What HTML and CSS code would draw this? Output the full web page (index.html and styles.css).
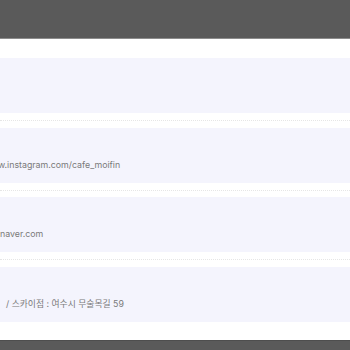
FILE: index.html
```html
<!DOCTYPE html>
<html lang="ko">
<head>
    <meta charset="UTF-8">
    <meta name="viewport" content="width=device-width, initial-scale=1.0">
    <title>Cafe Moifin</title>
    <link rel="stylesheet" href="styles.css">
</head>
<body>
    <div class="backdrop top"></div>
    <div class="panel">
        <div class="info-card"></div>
        <div class="divider"></div>
        <div class="info-card">
            <p class="value shift">w.instagram.com/cafe_moifin</p>
        </div>
        <div class="divider"></div>
        <div class="info-card">
            <p class="value">naver.com</p>
        </div>
        <div class="divider"></div>
        <div class="info-card">
            <p class="value address">/ 스카이점 : 여수시 무술목길 59</p>
        </div>
    </div>
    <div class="backdrop bottom"></div>
</body>
</html>
```

FILE: styles.css
```css
body {
    margin: 0;
    padding: 0;
    width: 350px;
    height: 350px;
    overflow: hidden;
    background-color: #ffffff;
    font-family: 'Inter', 'Noto Sans CJK KR', sans-serif;
}
.backdrop {
    background-color: #5a5a5a;
}
.backdrop.top {
    height: 38px;
    border-bottom: 1px solid #8c8c8c;
}
.backdrop.bottom {
    height: 10px;
    border-top: 1px solid #4e4e4e;
}
.panel {
    background-color: #ffffff;
    padding: 19px 0 18.5px;
}
.info-card {
    height: 55px;
    box-sizing: border-box;
    background-color: #f4f4fd;
    padding-top: 29px;
}
.divider {
    margin: 7px 0 6.5px;
    border-top: 1px dotted #e6e6e6;
}
.value {
    margin: 0;
    font-size: 8.8px;
    line-height: 16px;
    color: #7a7a7a;
    white-space: nowrap;
}
.value.shift {
    text-indent: -2px;
}
.value.address {
    padding-left: 6px;
}
```
